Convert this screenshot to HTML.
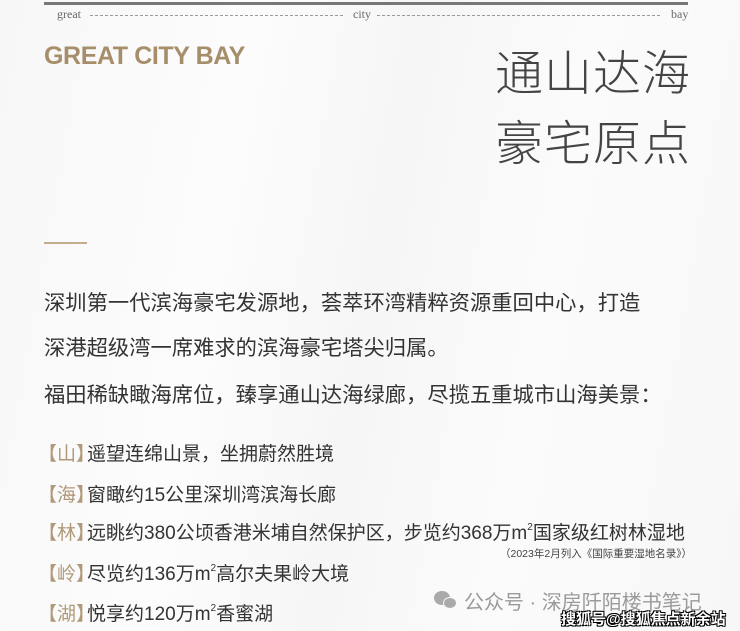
<!DOCTYPE html>
<html><head><meta charset="utf-8">
<style>
*{margin:0;padding:0;box-sizing:border-box}
body{width:740px;height:631px;overflow:hidden;position:relative;background:linear-gradient(100deg,#f7f7f7,#fcfcfc 30%,#f6f6f6 50%,#fbfbfb 70%,#f7f7f7);font-family:"Liberation Sans","Noto Sans CJK SC",sans-serif;color:#333}
.a{position:absolute;white-space:nowrap}
.top{left:44px;top:2px;width:644px;height:3px;background:#777}
.sm{font-family:"Liberation Serif",serif;font-size:12px;color:#666;top:7px}
.dash{top:15px;height:0;border-top:1px dashed #999}
.gcb{left:44px;top:42px;font-size:25px;font-weight:bold;color:#a68e6b;letter-spacing:-0.4px}
.t{left:495px;font-size:48px;color:#444;font-family:"Noto Sans CJK SC",sans-serif;font-weight:200;letter-spacing:1px}
.p{left:44px;font-size:21.3px;color:#333}
.li{left:38px;font-size:19px;color:#333}
.li b{color:#b09878;font-weight:normal;margin-right:-8px}
sup{font-size:10px;vertical-align:9px}
</style></head><body>
<div class="a top"></div>
<div class="a sm" style="left:57px">great</div>
<div class="a dash" style="left:90px;width:253px"></div>
<div class="a sm" style="left:353px">city</div>
<div class="a dash" style="left:377px;width:283px"></div>
<div class="a sm" style="left:671px">bay</div>
<div class="a gcb">GREAT CITY BAY</div>
<div class="a t" style="top:34px">通山达海</div>
<div class="a t" style="top:104px">豪宅原点</div>
<div class="a" style="left:44px;top:242px;width:43px;height:2px;background:#c4ad8c"></div>
<div class="a p" style="top:286px">深圳第一代滨海豪宅发源地，荟萃环湾精粹资源重回中心，打造</div>
<div class="a p" style="top:331px">深港超级湾一席难求的滨海豪宅塔尖归属。</div>
<div class="a p" style="top:378px">福田稀缺瞰海席位，臻享通山达海绿廊，尽揽五重城市山海美景：</div>
<div class="a li" style="top:439px"><b>【山】</b>遥望连绵山景，坐拥蔚然胜境</div>
<div class="a li" style="top:480px"><b>【海】</b>窗瞰约15公里深圳湾滨海长廊</div>
<div class="a li" style="top:518px"><b>【林】</b>远眺约380公顷香港米埔自然保护区，步览约368万m<sup>2</sup>国家级红树林湿地</div>
<div class="a" style="left:500px;top:546px;font-size:10.5px;color:#444">（2023年2月列入《国际重要湿地名录》）</div>
<div class="a li" style="top:559px"><b>【岭】</b>尽览约136万m<sup>2</sup>高尔夫果岭大境</div>
<div class="a li" style="top:599px"><b>【湖】</b>悦享约120万m<sup>2</sup>香蜜湖</div>
<div class="a" style="left:434px;top:591px;width:16px;height:14px;border-radius:50%;background:#aaa"></div>
<div class="a" style="left:443px;top:597px;width:14px;height:12px;border-radius:50%;background:#aaa;border:1px solid #f7f7f7"></div>
<div class="a" style="left:464px;top:586px;font-size:20px;color:#9a9a9a">公众号 · 深房阡陌楼书笔记</div>
<div class="a" style="left:561px;top:608px;font-size:15px;color:#fff;font-weight:bold;text-shadow:0 0 1px #000,1px 1px 0 #000,-1px -1px 0 #000,1px -1px 0 #000,-1px 1px 0 #000">搜狐号@搜狐焦点新余站</div>
</body></html>
